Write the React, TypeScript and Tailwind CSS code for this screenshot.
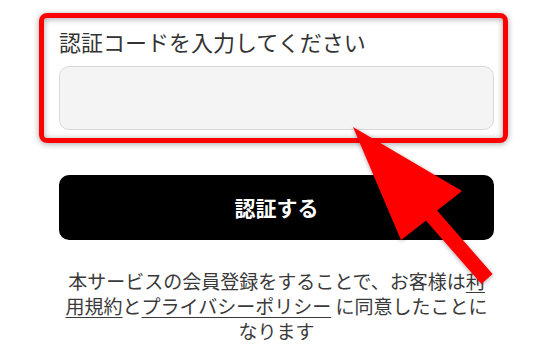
export default function App() {
  return (
    <div
      className="relative w-[553px] h-[357px] overflow-hidden bg-white"
      style={{ fontFamily: "'Noto Sans CJK JP', 'Noto Sans', sans-serif" }}
    >
      <div className="px-[59px] pt-[25px]">
        <label className="block text-[22px] leading-[32px] text-[#333]">
          認証コードを入力してください
        </label>
        <input
          type="text"
          className="mt-[9px] block w-full h-[64px] rounded-[10px] border border-[#d9d9d9] bg-[#f4f4f4] px-4 outline-none"
        />

        <button className="mt-[45px] flex w-full h-[65px] items-center justify-center rounded-[10px] bg-black text-[21px] font-bold text-white">
          認証する
        </button>

        <p className="mx-auto mt-[28px] w-[430px] text-center text-[19px] leading-[25px] text-[#3a3a3a]">
          本サービスの会員登録をすることで、お客様は
          <a href="#" className="underline underline-offset-[3px]">
            利用規約
          </a>
          と
          <a href="#" className="underline underline-offset-[3px]">
            プライバシーポリシー
          </a>{" "}
          に同意したことになります
        </p>
      </div>

      {/* annotation: red frame */}
      <div className="pointer-events-none absolute left-[39px] top-[13px] w-[469px] h-[130px] rounded-[8px] border-[5px] border-[#ff0000] shadow-[0_1px_6px_rgba(0,0,0,0.35),inset_0_1px_6px_rgba(0,0,0,0.35)]" />

      {/* annotation: red arrow */}
      <svg
        className="pointer-events-none absolute left-0 top-0"
        width="553"
        height="357"
        viewBox="0 0 553 357"
      >
        <defs>
          <filter id="sh" x="-20%" y="-20%" width="140%" height="140%">
            <feDropShadow dx="0" dy="1" stdDeviation="2" floodColor="#000" floodOpacity="0.35" />
          </filter>
        </defs>
        <polygon
          points="353,127 462,191 437,210.5 492.6,274 481.4,284 426,220.5 401,240"
          fill="#ff0000"
          filter="url(#sh)"
        />
      </svg>
    </div>
  );
}
